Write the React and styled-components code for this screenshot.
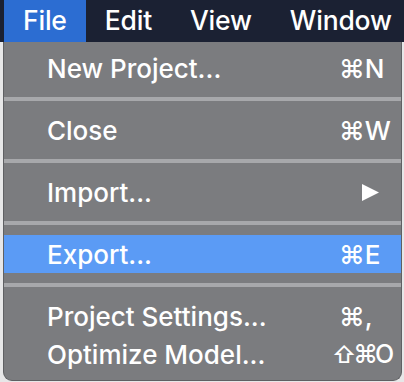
import React from 'react'
import styled, { createGlobalStyle } from 'styled-components'

const Global = createGlobalStyle`
  html, body {
    margin: 0;
    padding: 0;
    background: #e7e7e8;
  }
  body {
    font-family: Inter, "Noto Sans", "Liberation Sans", sans-serif;
    -webkit-font-smoothing: antialiased;
  }
`

const Page = styled.div`
  width: 404px;
  height: 382px;
  display: flex;
  flex-direction: column;
  overflow: hidden;
`

const MenuBar = styled.div`
  height: 42px;
  flex-shrink: 0;
  display: flex;
  align-items: stretch;
  padding-left: 4px;
  background: #1b2133;
`

const MenuTitle = styled.div`
  display: flex;
  align-items: center;
  padding: 0 19px 2px;
  font-size: 26.5px;
  font-weight: 500;
  letter-spacing: -0.2px;
  color: #ffffff;
  white-space: nowrap;
  background: ${(props) => (props.active ? '#2c6dd2' : 'transparent')};
`

const Panel = styled.div`
  margin: 0 2px 0 3px;
  padding: 7px 0 7px;
  background: #7b7c7f;
  border-left: 1px solid #5f6063;
  border-right: 1px solid #5f6063;
  border-bottom: 1px solid #5f6063;
  border-radius: 0 0 9px 9px;
`

const Item = styled.div`
  height: 38px;
  display: flex;
  align-items: center;
  padding: 0 6px 0 43px;
  font-size: 26px;
  font-weight: 500;
  color: #ffffff;
  white-space: nowrap;
  background: ${(props) => (props.active ? '#5b9bf5' : 'transparent')};
`

const Label = styled.span`
  flex: 1;
`

const Shortcut = styled.span`
  width: ${(props) => (props.wide ? '63px' : '56px')};
  font-size: ${(props) => (props.wide ? '25px' : '26px')};
  letter-spacing: ${(props) => (props.wide ? '-3px' : '0')};
  text-align: left;
`

const Shift = styled.span`
  font-size: 23px;
`

const Separator = styled.div`
  height: 4px;
  margin: 10px 0;
  background: #a7a8ab;
`

const Arrow = () => (
  <svg width='19' height='19' viewBox='0 0 19 19' style={{ marginLeft: 22 }}>
    <path d='M1 1 L18 9.5 L1 18 Z' fill='#ffffff' />
  </svg>
)

const titles = ['File', 'Edit', 'View', 'Window']

const App = () => (
  <Page>
    <Global />
    <MenuBar>
      {titles.map((t, i) => (
        <MenuTitle key={t} active={i === 0}>{t}</MenuTitle>
      ))}
    </MenuBar>
    <Panel>
      <Item>
        <Label>New Project...</Label>
        <Shortcut>⌘N</Shortcut>
      </Item>
      <Separator />
      <Item>
        <Label>Close</Label>
        <Shortcut>⌘W</Shortcut>
      </Item>
      <Separator />
      <Item>
        <Label>Import...</Label>
        <Shortcut><Arrow /></Shortcut>
      </Item>
      <Separator />
      <Item active>
        <Label>Export...</Label>
        <Shortcut>⌘E</Shortcut>
      </Item>
      <Separator />
      <Item>
        <Label>Project Settings...</Label>
        <Shortcut>⌘,</Shortcut>
      </Item>
      <Item>
        <Label>Optimize Model...</Label>
        <Shortcut wide><Shift>⇧</Shift>⌘O</Shortcut>
      </Item>
    </Panel>
  </Page>
)

export default App
